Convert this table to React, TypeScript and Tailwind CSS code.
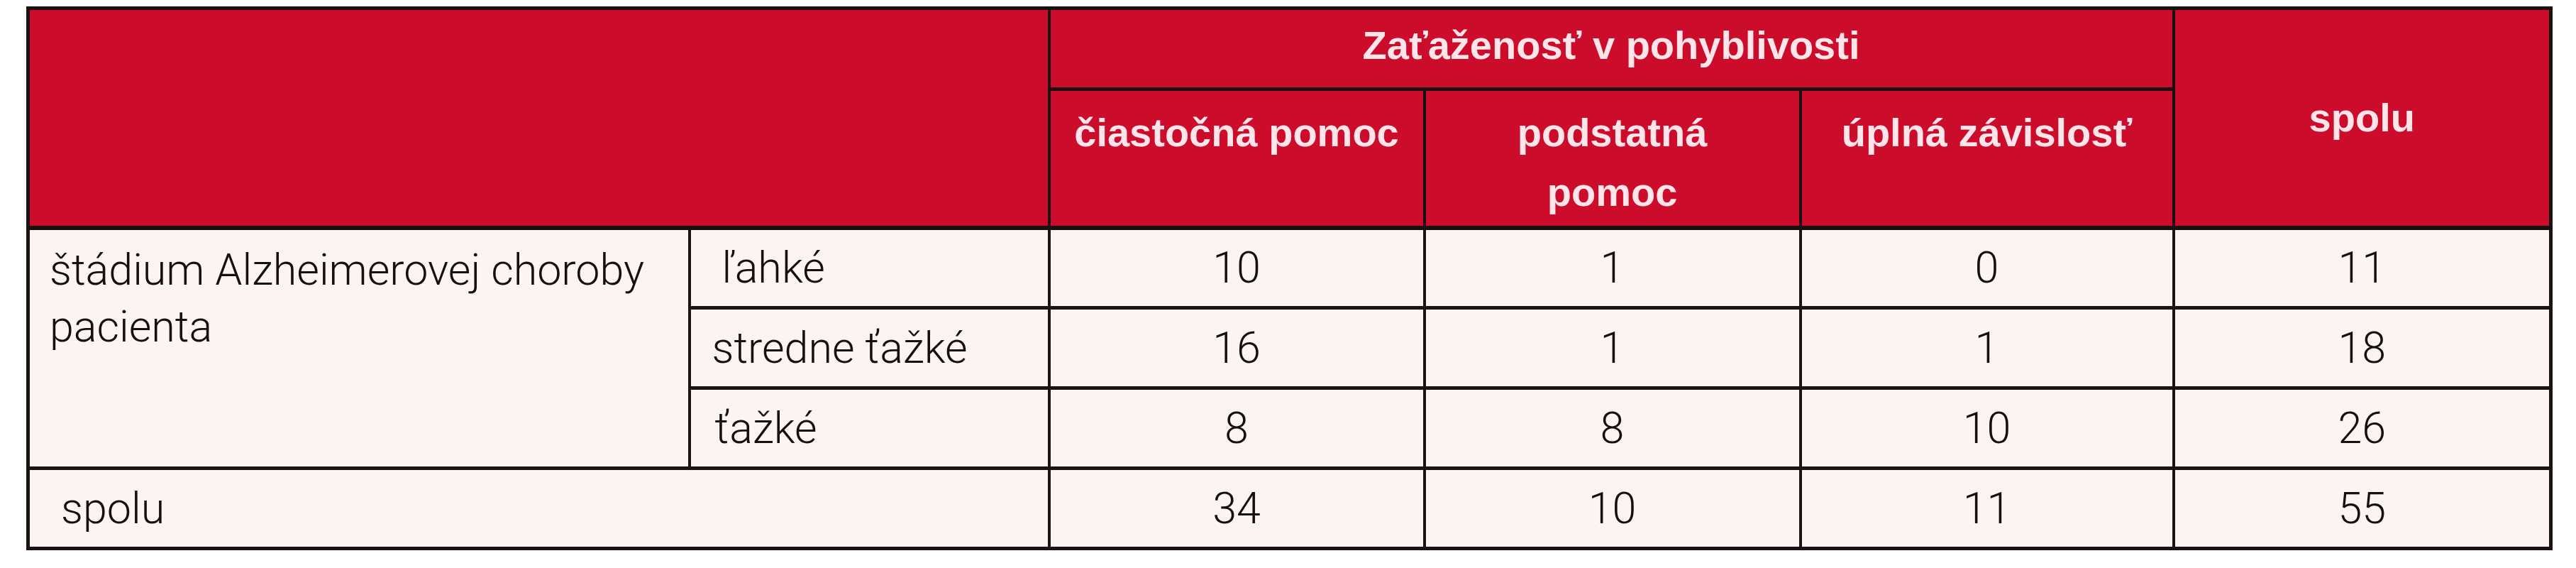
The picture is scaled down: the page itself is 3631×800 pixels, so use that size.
import React from "react";

const HEAD =
  "bg-[#cc0c2b] text-[#ffe4ea] font-bold text-[56px] leading-[84px] border-x-[4px] border-y-[5px] border-[#1b1011]";
const BODY =
  "bg-[#fcf3f2] text-[#141010] font-light text-[61px] leading-[80px] border-x-[4px] border-y-[5px] border-[#1b1212]";

const rows: { label: string; pad: string; vals: string[] }[] = [
  { label: "ľahké", pad: "pl-[44px]", vals: ["10", "1", "0", "11"] },
  { label: "stredne ťažké", pad: "pl-[30px]", vals: ["16", "1", "1", "18"] },
  { label: "ťažké", pad: "pl-[34px]", vals: ["8", "8", "10", "26"] },
];

export default function App() {
  return (
    <div
      className="w-[3631px] h-[800px] bg-white pt-[9px] pl-[37px]"
      style={{ fontFamily: '"Liberation Sans", Arial, sans-serif' }}
    >
      <table className="table-fixed border-collapse w-[3556px] border-[5px] border-[#1b1212]">
        <colgroup>
          <col className="w-[932px]" />
          <col className="w-[507px]" />
          <col className="w-[529px]" />
          <col className="w-[530px]" />
          <col className="w-[526px]" />
          <col className="w-[532px]" />
        </colgroup>
        <thead>
          <tr className="h-[114px]">
            <th colSpan={2} rowSpan={2} className={`${HEAD} border-b-[6px]`} />
            <th colSpan={3} className={`${HEAD} align-top pt-[8px] text-center`}>
              Zaťaženosť v pohyblivosti
            </th>
            <th rowSpan={2} className={`${HEAD} border-b-[6px] align-middle text-center`}>
              spolu
            </th>
          </tr>
          <tr className="h-[195px]">
            <th className={`${HEAD} border-b-[6px] align-top pt-[17px] text-center`}>čiastočná pomoc</th>
            <th className={`${HEAD} border-b-[6px] align-top pt-[17px] text-center`}>
              podstatná
              <br />
              pomoc
            </th>
            <th className={`${HEAD} border-b-[6px] align-top pt-[17px] text-center`}>úplná závislosť</th>
          </tr>
        </thead>
        <tbody style={{ fontFamily: 'Roboto, "Liberation Sans", sans-serif' }}>
          {rows.map((r, i) => (
            <tr key={r.label} className="h-[113px]">
              {i === 0 && (
                <td rowSpan={3} className={`${BODY} align-top pt-[16px] pl-[28px] whitespace-nowrap`}>
                  štádium Alzheimerovej choroby
                  <br />
                  pacienta
                </td>
              )}
              <td className={`${BODY} align-middle whitespace-nowrap ${r.pad}`}>{r.label}</td>
              {r.vals.map((v, j) => (
                <td key={j} className={`${BODY} align-middle text-center`}>
                  {v}
                </td>
              ))}
            </tr>
          ))}
          <tr className="h-[113px]">
            <td colSpan={2} className={`${BODY} align-middle pl-[44px]`}>
              spolu
            </td>
            <td className={`${BODY} align-middle text-center`}>34</td>
            <td className={`${BODY} align-middle text-center`}>10</td>
            <td className={`${BODY} align-middle text-center`}>11</td>
            <td className={`${BODY} align-middle text-center`}>55</td>
          </tr>
        </tbody>
      </table>
    </div>
  );
}
